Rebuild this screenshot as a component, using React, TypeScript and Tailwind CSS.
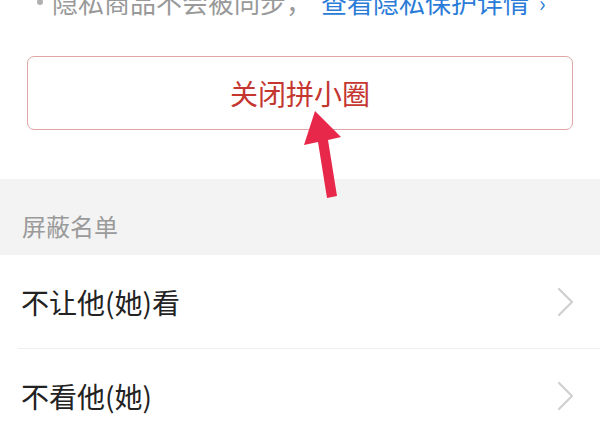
import React from "react";

const Chevron = () => (
  <svg width="18" height="30" viewBox="0 0 18 30" fill="none" className="shrink-0">
    <path d="M2 2 L15 15 L2 28" stroke="#cfcfcf" strokeWidth="2.2" strokeLinecap="round" strokeLinejoin="round" />
  </svg>
);

export default function App() {
  return (
    <div
      className="relative w-[600px] h-[427px] overflow-hidden bg-white"
      style={{ fontFamily: '"Noto Sans CJK SC", "Noto Sans", sans-serif' }}
    >
      <div className="-mt-[16px] flex items-center pl-[37px] text-[26px] leading-[36px] text-[#999999] whitespace-nowrap">
        <span className="mr-[9px] inline-block h-[6px] w-[6px] rounded-full bg-[#b0b0b0]" />
        <span>隐私商品不会被同步，</span>
        <span className="ml-[9px] text-[#2a7cd8]">查看隐私保护详情</span>
        <span className="ml-[10px] text-[#2a7cd8] text-[22px]">›</span>
      </div>

      <div className="mx-[27px] mt-[36px] flex h-[74px] items-center justify-center rounded-[7px] border-[1.5px] border-[#dea6a6]">
        <span className="text-[28px] leading-[34px] tracking-[0px] text-[#c4362f]">关闭拼小圈</span>
      </div>

      <div className="mt-[49px] h-[76px] bg-[#f3f3f3] pl-[22px] pt-[35px]">
        <div className="text-[24px] leading-[24px] text-[#9a9a9a]">屏蔽名单</div>
      </div>

      <div className="flex h-[93px] items-center justify-between pl-[21px] pr-[25px]">
        <span className="text-[28px] leading-[34px] text-[#222222]">不让他(她)看</span>
        <Chevron />
      </div>
      <div className="ml-[18px] h-px bg-[#eeeeee]" />
      <div className="flex h-[93px] items-center justify-between pl-[21px] pr-[25px]">
        <span className="text-[28px] leading-[34px] text-[#222222]">不看他(她)</span>
        <Chevron />
      </div>

      <svg className="absolute left-0 top-0" width="600" height="427" viewBox="0 0 600 427">
        <polygon
          points="315,111 341,137 328,140 337,196 327,198 318,142 304,145"
          fill="#e8284a"
        />
      </svg>
    </div>
  );
}
